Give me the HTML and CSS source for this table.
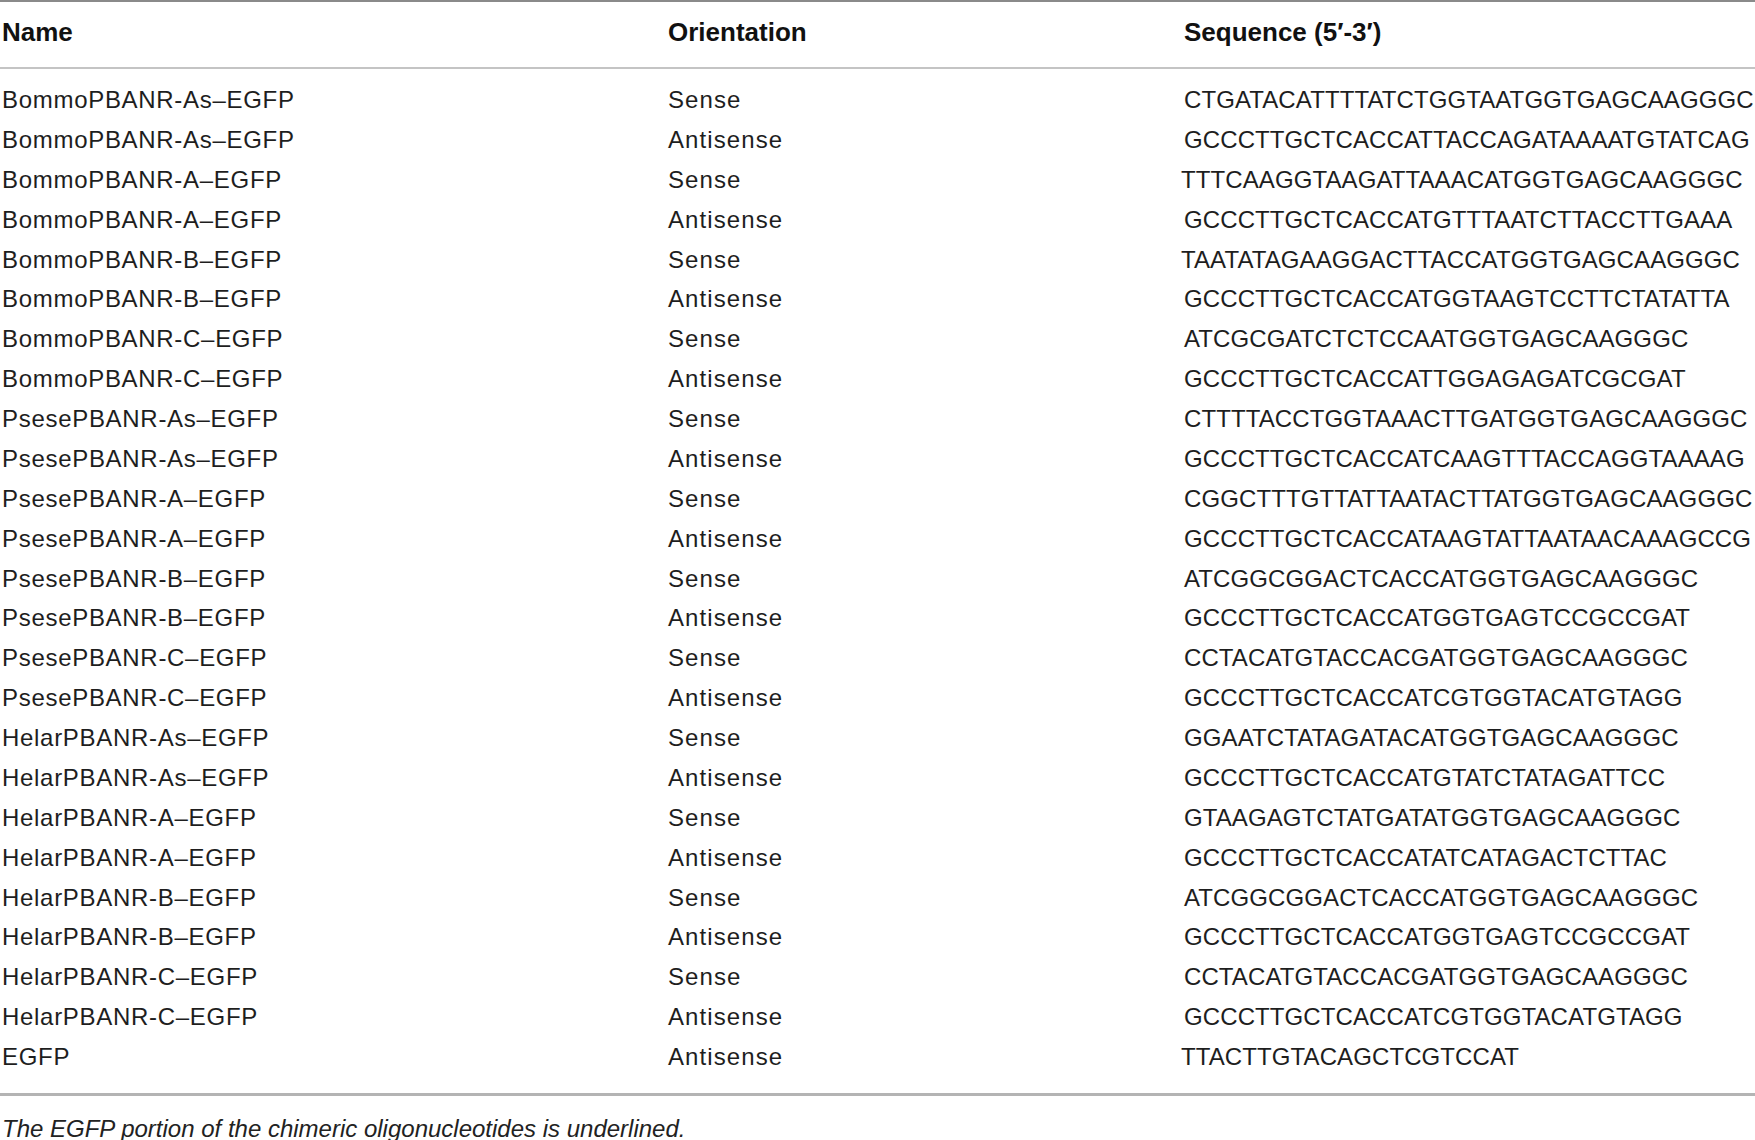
FILE: index.html
```html
<!DOCTYPE html>
<html lang="en">
<head>
  <meta charset="UTF-8">
  <meta name="viewport" content="width=device-width, initial-scale=1.0">
  <title>Primers for EGFP chimeric constructs</title>
  <link rel="stylesheet" href="styles.css">
</head>
<body>
  <table class="oligo-table">
    <colgroup>
      <col class="col-name">
      <col class="col-orient">
      <col class="col-seq">
    </colgroup>
    <thead>
      <tr>
        <th>Name</th>
        <th>Orientation</th>
        <th>Sequence (5′-3′)</th>
      </tr>
    </thead>
    <tbody>
      <tr><td>BommoPBANR-As–EGFP</td><td class="orient">Sense</td><td class="seq">CTGATACATTTTATCTGGTAATGGTGAGCAAGGGC</td></tr>
      <tr><td>BommoPBANR-As–EGFP</td><td class="orient">Antisense</td><td class="seq">GCCCTTGCTCACCATTACCAGATAAAATGTATCAG</td></tr>
      <tr><td>BommoPBANR-A–EGFP</td><td class="orient">Sense</td><td class="seq shift">TTTCAAGGTAAGATTAAACATGGTGAGCAAGGGC</td></tr>
      <tr><td>BommoPBANR-A–EGFP</td><td class="orient">Antisense</td><td class="seq">GCCCTTGCTCACCATGTTTAATCTTACCTTGAAA</td></tr>
      <tr><td>BommoPBANR-B–EGFP</td><td class="orient">Sense</td><td class="seq shift">TAATATAGAAGGACTTACCATGGTGAGCAAGGGC</td></tr>
      <tr><td>BommoPBANR-B–EGFP</td><td class="orient">Antisense</td><td class="seq">GCCCTTGCTCACCATGGTAAGTCCTTCTATATTA</td></tr>
      <tr><td>BommoPBANR-C–EGFP</td><td class="orient">Sense</td><td class="seq">ATCGCGATCTCTCCAATGGTGAGCAAGGGC</td></tr>
      <tr><td>BommoPBANR-C–EGFP</td><td class="orient">Antisense</td><td class="seq">GCCCTTGCTCACCATTGGAGAGATCGCGAT</td></tr>
      <tr><td>PsesePBANR-As–EGFP</td><td class="orient">Sense</td><td class="seq">CTTTTACCTGGTAAACTTGATGGTGAGCAAGGGC</td></tr>
      <tr><td>PsesePBANR-As–EGFP</td><td class="orient">Antisense</td><td class="seq">GCCCTTGCTCACCATCAAGTTTACCAGGTAAAAG</td></tr>
      <tr><td>PsesePBANR-A–EGFP</td><td class="orient">Sense</td><td class="seq">CGGCTTTGTTATTAATACTTATGGTGAGCAAGGGC</td></tr>
      <tr><td>PsesePBANR-A–EGFP</td><td class="orient">Antisense</td><td class="seq">GCCCTTGCTCACCATAAGTATTAATAACAAAGCCG</td></tr>
      <tr><td>PsesePBANR-B–EGFP</td><td class="orient">Sense</td><td class="seq">ATCGGCGGACTCACCATGGTGAGCAAGGGC</td></tr>
      <tr><td>PsesePBANR-B–EGFP</td><td class="orient">Antisense</td><td class="seq">GCCCTTGCTCACCATGGTGAGTCCGCCGAT</td></tr>
      <tr><td>PsesePBANR-C–EGFP</td><td class="orient">Sense</td><td class="seq">CCTACATGTACCACGATGGTGAGCAAGGGC</td></tr>
      <tr><td>PsesePBANR-C–EGFP</td><td class="orient">Antisense</td><td class="seq">GCCCTTGCTCACCATCGTGGTACATGTAGG</td></tr>
      <tr><td>HelarPBANR-As–EGFP</td><td class="orient">Sense</td><td class="seq">GGAATCTATAGATACATGGTGAGCAAGGGC</td></tr>
      <tr><td>HelarPBANR-As–EGFP</td><td class="orient">Antisense</td><td class="seq">GCCCTTGCTCACCATGTATCTATAGATTCC</td></tr>
      <tr><td>HelarPBANR-A–EGFP</td><td class="orient">Sense</td><td class="seq">GTAAGAGTCTATGATATGGTGAGCAAGGGC</td></tr>
      <tr><td>HelarPBANR-A–EGFP</td><td class="orient">Antisense</td><td class="seq">GCCCTTGCTCACCATATCATAGACTCTTAC</td></tr>
      <tr><td>HelarPBANR-B–EGFP</td><td class="orient">Sense</td><td class="seq">ATCGGCGGACTCACCATGGTGAGCAAGGGC</td></tr>
      <tr><td>HelarPBANR-B–EGFP</td><td class="orient">Antisense</td><td class="seq">GCCCTTGCTCACCATGGTGAGTCCGCCGAT</td></tr>
      <tr><td>HelarPBANR-C–EGFP</td><td class="orient">Sense</td><td class="seq">CCTACATGTACCACGATGGTGAGCAAGGGC</td></tr>
      <tr><td>HelarPBANR-C–EGFP</td><td class="orient">Antisense</td><td class="seq">GCCCTTGCTCACCATCGTGGTACATGTAGG</td></tr>
      <tr><td>EGFP</td><td class="orient">Antisense</td><td class="seq shift">TTACTTGTACAGCTCGTCCAT</td></tr>
    </tbody>
  </table>
  <p class="footnote">The EGFP portion of the chimeric oligonucleotides is underlined.</p>
</body>
</html>
```

FILE: styles.css
```css
body {
  margin: 0;
  padding: 0;
  background-color: #fff;
  color: #1e1e1e;
  font-family: 'Liberation Sans', Arial, Helvetica, sans-serif;
}
.oligo-table {
  width: 1755px;
  border-collapse: collapse;
  table-layout: fixed;
}
.col-name {
  width: 668px;
}
.col-orient {
  width: 516px;
}
.oligo-table th,
.oligo-table td {
  padding: 0;
  text-align: left;
  white-space: nowrap;
}
.oligo-table th:first-child,
.oligo-table td:first-child {
  padding-left: 2px;
}
.oligo-table thead tr {
  border-top: 2px solid #8a8a8a;
  border-bottom: 2px solid #c4c4c4;
}
.oligo-table th {
  font-size: 26px;
  font-weight: bold;
  line-height: 30px;
  padding-top: 15px;
  padding-bottom: 20px;
  color: #111;
}
.oligo-table td {
  font-size: 24px;
  line-height: 39.87px;
  letter-spacing: 0.7px;
}
.oligo-table td.orient {
  letter-spacing: 1.1px;
}
.oligo-table td.seq {
  letter-spacing: 0.1px;
}
.oligo-table td.shift {
  padding-left: 0;
  text-indent: -3px;
}
.oligo-table tbody tr:first-child td {
  padding-top: 11px;
}
.oligo-table tbody tr:last-child td {
  padding-bottom: 16px;
}
.oligo-table tbody tr:last-child {
  border-bottom: 3px solid #b4b4b4;
}
.footnote {
  margin: 0;
  padding: 18px 0 0 2px;
  font-size: 24px;
  font-style: italic;
  line-height: 30px;
  color: #222;
}
```
